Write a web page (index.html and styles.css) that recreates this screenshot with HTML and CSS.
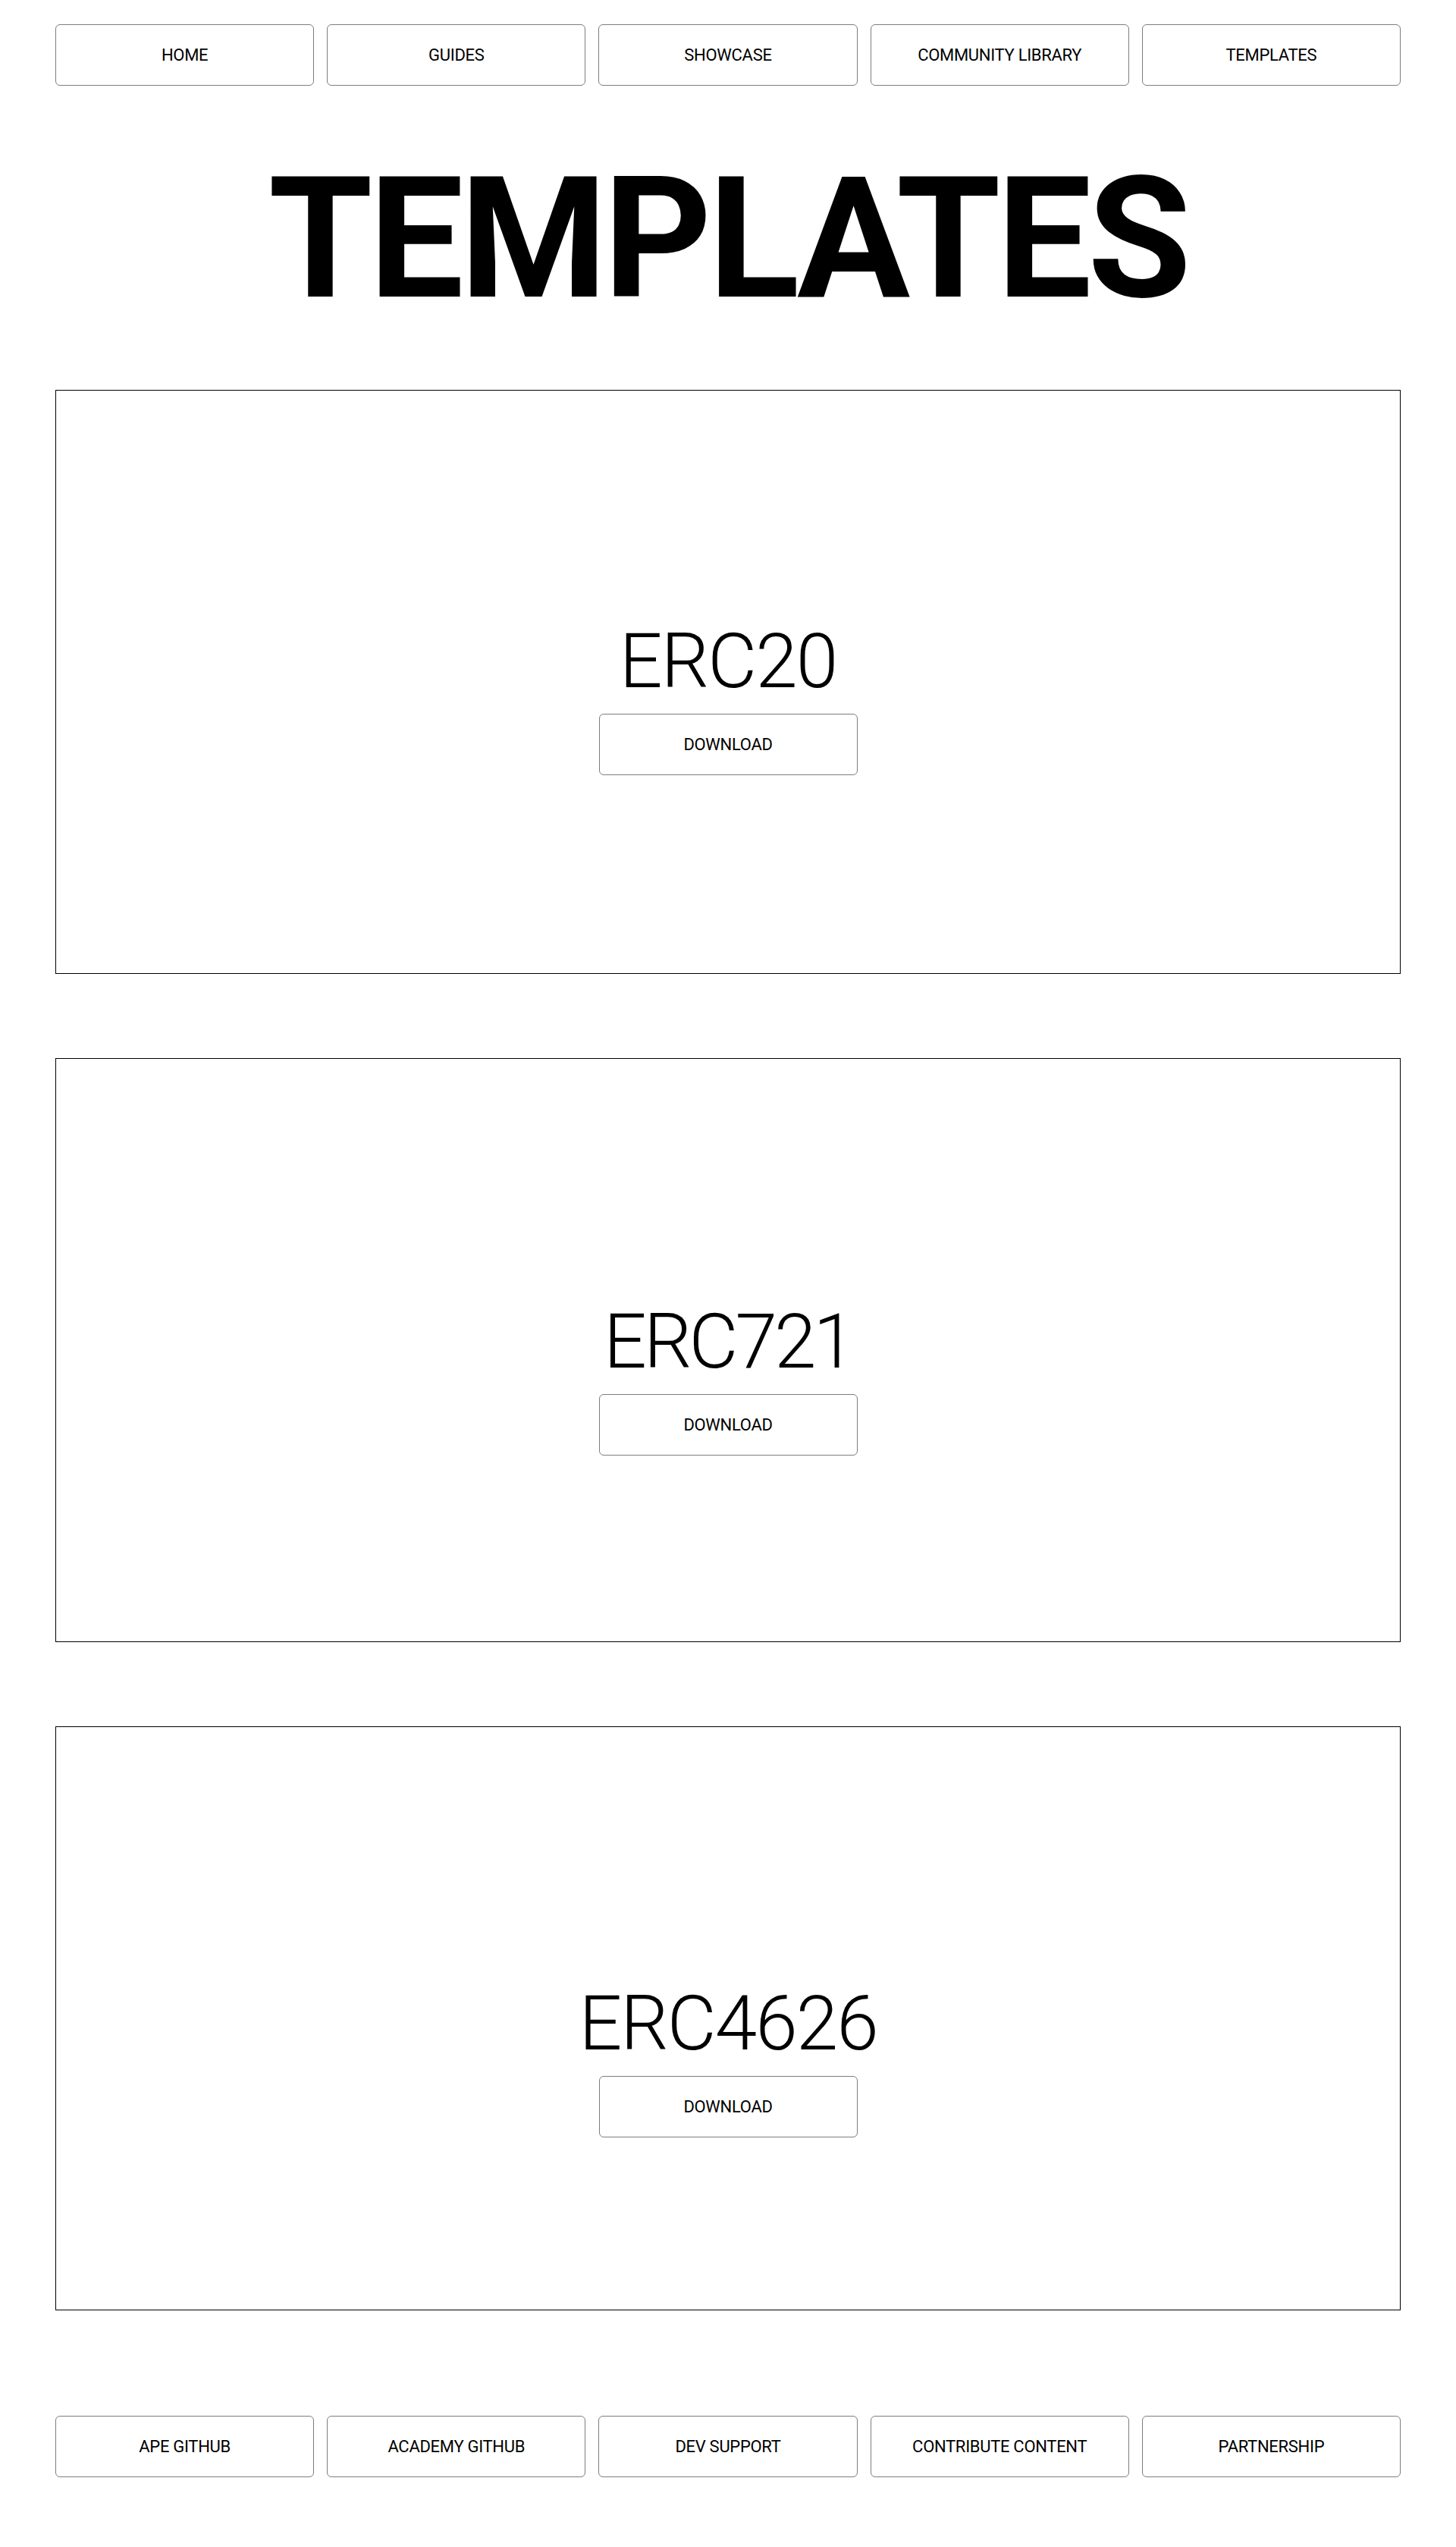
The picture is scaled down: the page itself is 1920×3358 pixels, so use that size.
FILE: index.html
```html
<!DOCTYPE html>
<html lang="en">
<head>
<meta charset="utf-8">
<title>Templates</title>
<link rel="stylesheet" href="styles.css">
</head>
<body>
<div class="page">
  <nav class="btn-row">
    <a class="btn" href="#">HOME</a>
    <a class="btn" href="#">GUIDES</a>
    <a class="btn" href="#">SHOWCASE</a>
    <a class="btn" href="#">COMMUNITY LIBRARY</a>
    <a class="btn" href="#">TEMPLATES</a>
  </nav>

  <h1 class="page-title">TEMPLATES</h1>

  <main class="cards">
    <section class="card card-1">
      <h2 class="card-title">ERC20</h2>
      <a class="btn btn-download" href="#">DOWNLOAD</a>
    </section>
    <section class="card card-2">
      <h2 class="card-title card-title-narrow">ERC721</h2>
      <a class="btn btn-download" href="#">DOWNLOAD</a>
    </section>
    <section class="card card-3">
      <h2 class="card-title">ERC4626</h2>
      <a class="btn btn-download" href="#">DOWNLOAD</a>
    </section>
  </main>

  <footer class="btn-row footer">
    <a class="btn" href="#">APE GITHUB</a>
    <a class="btn" href="#">ACADEMY GITHUB</a>
    <a class="btn" href="#">DEV SUPPORT</a>
    <a class="btn" href="#">CONTRIBUTE CONTENT</a>
    <a class="btn" href="#">PARTNERSHIP</a>
  </footer>
</div>
</body>
</html>
```

FILE: styles.css
```css
* {
  box-sizing: border-box;
}

html, body {
  margin: 0;
  padding: 0;
  background: #ffffff;
  color: #000000;
  font-family: Roboto, "Noto Sans", "Liberation Sans", sans-serif;
}

.page {
  padding: 32px 73px 91px 73px;
}

.btn-row {
  display: grid;
  grid-template-columns: repeat(5, 1fr);
  gap: 17px;
}

.btn {
  display: flex;
  align-items: center;
  justify-content: center;
  height: 81px;
  border: 1px solid #7d7d7d;
  border-radius: 6px;
  background: #ffffff;
  color: #000000;
  text-decoration: none;
  font-size: 22px;
  font-weight: 400;
  letter-spacing: -0.3px;
}

.page-title {
  margin: 91px 0 88px 0;
  text-align: center;
  font-size: 222px;
  line-height: 1;
  font-weight: 700;
  letter-spacing: -5px;
}

.cards {
  display: flex;
  flex-direction: column;
  gap: 111px;
}

.card {
  height: 770px;
  border: 1px solid #000000;
  display: flex;
  flex-direction: column;
  align-items: center;
  padding-top: 307px;
}

.card-2 {
  padding-top: 323px;
}

.card-3 {
  padding-top: 341px;
}

.card-title {
  margin: 0 0 19px 0;
  font-size: 100px;
  line-height: 1;
  font-weight: 300;
  letter-spacing: -2px;
}

.card-title-narrow {
  letter-spacing: -4px;
}

.btn-download {
  width: 341px;
}

.footer {
  margin-top: 139px;
}
```
